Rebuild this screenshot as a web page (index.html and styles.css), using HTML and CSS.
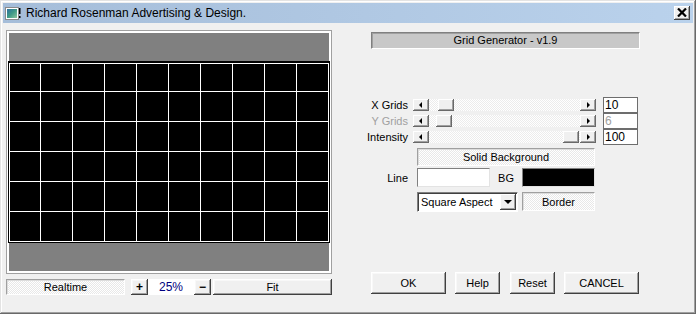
FILE: index.html
```html
<html>
  <head>
    <title>Grid Generator</title>
    <link rel="stylesheet" href="styles.css">
  </head>
<body>
  <div class="window">
    <div class="titlebar">
      <svg class="app-icon" width="16" height="13" viewBox="0 0 16 13">
        <defs>
          <linearGradient id="ico" x1="0" y1="0" x2="1" y2="1">
            <stop offset="0" stop-color="#2f6f9f"/>
            <stop offset="0.5" stop-color="#3f9a86"/>
            <stop offset="1" stop-color="#8fc8a0"/>
          </linearGradient>
        </defs>
        <rect x="0.5" y="0.5" width="13" height="12" fill="#fff" stroke="#8a8a8a"/>
        <rect x="2" y="2" width="10" height="9" fill="url(#ico)"/>
        <rect x="14" y="1" width="1.5" height="6" fill="#000"/>
        <rect x="14" y="9" width="1.5" height="2" fill="#000"/>
      </svg>
      <span class="caption">Richard Rosenman Advertising &amp; Design.</span>
      <div class="close">
        <svg width="10" height="9" viewBox="0 0 10 9">
          <path d="M1 0.5 L9 8.5 M9 0.5 L1 8.5" stroke="#000" stroke-width="2.2"/>
        </svg>
      </div>
    </div>

    <div class="client">
      <div class="left">
        <div class="preview">
          <div class="canvas">
            <svg class="grid" width="322" height="182" viewBox="0 0 322 182">
              <rect width="322" height="182" fill="#000"/>
              <g fill="#fff">
                <rect x="1" y="2" width="1" height="179"/>
                <rect x="32" y="2" width="1" height="179"/>
                <rect x="64" y="2" width="1" height="179"/>
                <rect x="96" y="2" width="1" height="179"/>
                <rect x="128" y="2" width="1" height="179"/>
                <rect x="160" y="2" width="1" height="179"/>
                <rect x="192" y="2" width="1" height="179"/>
                <rect x="224" y="2" width="1" height="179"/>
                <rect x="256" y="2" width="1" height="179"/>
                <rect x="288" y="2" width="1" height="179"/>
                <rect x="320" y="2" width="1" height="179"/>
                <rect x="1" y="2" width="320" height="1"/>
                <rect x="1" y="30" width="320" height="1"/>
                <rect x="1" y="60" width="320" height="1"/>
                <rect x="1" y="90" width="320" height="1"/>
                <rect x="1" y="120" width="320" height="1"/>
                <rect x="1" y="150" width="320" height="1"/>
                <rect x="1" y="180" width="320" height="1"/>
              </g>
            </svg>
          </div>
        </div>
        <div class="zoombar">
          <div class="toggle realtime">Realtime</div>
          <div class="btn step">+</div>
          <div class="zoom">25%</div>
          <div class="btn step">&minus;</div>
          <div class="btn fit">Fit</div>
        </div>
      </div>

      <div class="right">
        <div class="version">Grid Generator - v1.9</div>

        <div class="sliders">
          <div class="row">
            <div class="label">X Grids</div>
            <div class="scroll">
              <div class="arrow"><span class="tri-left"></span></div>
              <div class="track"><div class="thumb" style="margin-left: 9px"></div></div>
              <div class="arrow"><span class="tri-right"></span></div>
            </div>
            <div class="num">10</div>
          </div>
          <div class="row disabled">
            <div class="label">Y Grids</div>
            <div class="scroll">
              <div class="arrow"><span class="tri-left"></span></div>
              <div class="track"><div class="thumb" style="margin-left: 7px"></div></div>
              <div class="arrow"><span class="tri-right"></span></div>
            </div>
            <div class="num">6</div>
          </div>
          <div class="row">
            <div class="label">Intensity</div>
            <div class="scroll">
              <div class="arrow"><span class="tri-left"></span></div>
              <div class="track"><div class="thumb" style="margin-left: 134px"></div></div>
              <div class="arrow"><span class="tri-right"></span></div>
            </div>
            <div class="num">100</div>
          </div>
        </div>

        <div class="toggle solid">Solid Background</div>

        <div class="colors">
          <div class="label">Line</div>
          <div class="swatch line"></div>
          <div class="bg-label">BG</div>
          <div class="swatch bg"></div>
        </div>

        <div class="options">
          <div class="select">
            <span class="value">Square Aspect</span>
            <div class="drop"><span class="tri-down"></span></div>
          </div>
          <div class="toggle border">Border</div>
        </div>

        <div class="actions">
          <div class="btn ok">OK</div>
          <div class="btn help">Help</div>
          <div class="btn reset">Reset</div>
          <div class="btn cancel">CANCEL</div>
        </div>
      </div>
    </div>
  </div>
</body>
</html>
```

FILE: styles.css
```css
html, body {
    margin: 0;
    padding: 0;
    background: #f0f0f0;
}
body {
    font-family: "Liberation Sans", Arial, sans-serif;
    font-size: 11px;
    color: #000;
}
.window {
    width: 696px;
    height: 314px;
    box-sizing: border-box;
    padding: 3px;
    background: #f0f0f0;
    box-shadow: inset -1px -1px #696969, inset 1px 1px #e3e3e3,
                inset -2px -2px #a0a0a0, inset 2px 2px #fff;
    display: flex;
    flex-direction: column;
}

/* title bar */
.titlebar {
    height: 20px;
    display: flex;
    align-items: center;
    padding-left: 2px;
    background: linear-gradient(to right, #a5bdd9, #bad2ec);
}
.app-icon {
    display: block;
    margin-top: 1px;
}
.caption {
    margin-left: 5px;
    font-size: 12px;
    color: #000;
    flex: 1;
}
.close {
    width: 16px;
    height: 14px;
    margin-right: 3px;
    box-sizing: border-box;
    background: #f0f0f0;
    box-shadow: inset -1px -1px #404040, inset 1px 1px #fff, inset -2px -2px #a0a0a0;
    display: flex;
    align-items: center;
    justify-content: center;
}
.close svg {
    display: block;
    margin-top: -1px;
}

/* client */
.client {
    flex: 1;
    display: flex;
    padding: 7px 0 0 3px;
}
.left {
    width: 326px;
    display: flex;
    flex-direction: column;
}
.preview {
    height: 244px;
    box-sizing: border-box;
    border: 1px solid #a0a0a0;
}
.canvas {
    height: 100%;
    box-sizing: border-box;
    border: 2px solid #fff;
    background: #808080;
    display: flex;
    justify-content: center;
    padding-top: 28px;
}
.grid {
    display: block;
    margin: 0 -1px;
}

.zoombar {
    display: flex;
    margin-top: 5px;
    height: 16px;
}
.zoombar .realtime {
    width: 119px;
    margin-right: 6px;
}
.zoombar .step {
    width: 17px;
    font-size: 12px;
    font-weight: bold;
    line-height: 14px;
}
.zoom {
    width: 46px;
    background: #fff;
    color: #000080;
    font-size: 12px;
    text-align: center;
    line-height: 16px;
}
.zoombar .fit {
    width: 119px;
    margin-left: 2px;
}

/* generic controls */
.btn {
    box-sizing: border-box;
    background: #f0f0f0;
    box-shadow: inset -1px -1px #404040, inset 1px 1px #fff,
                inset -2px -2px #a0a0a0, inset 2px 2px #f8f8f8;
    display: flex;
    align-items: center;
    justify-content: center;
}
.toggle {
    box-sizing: border-box;
    border: 1px solid;
    border-color: #a0a0a0 #fff #fff #a0a0a0;
    box-shadow: inset 1px 1px #dcdcdc;
    background: repeating-conic-gradient(#fff 0 25%, #e8e8e8 0 50%) 0 0 / 2px 2px;
    display: flex;
    align-items: center;
    justify-content: center;
}

/* right side */
.right {
    margin-left: 16px;
    width: 300px;
    display: flex;
    flex-direction: column;
}
.version {
    margin: 2px 0 0 23px;
    width: 269px;
    height: 17px;
    box-sizing: border-box;
    border: 1px solid;
    border-color: #808080 #fff #fff #808080;
    box-shadow: inset 1px 1px #a0a0a0;
    background: #c8c8c8;
    text-align: center;
    line-height: 15px;
}

.sliders {
    margin-top: 48px;
}
.row {
    display: flex;
    align-items: center;
    height: 16px;
}
.label {
    width: 60px;
    text-align: right;
}
.row.disabled .label,
.row.disabled .num {
    color: #a0a0a0;
}
.scroll {
    width: 183px;
    height: 12px;
    margin: 0 7px 0 5px;
    display: flex;
}
.arrow, .thumb {
    width: 16px;
    height: 12px;
    box-sizing: border-box;
    background: #f0f0f0;
    box-shadow: inset -1px -1px #696969, inset 1px 1px #fff, inset -2px -2px #a0a0a0;
    display: flex;
    align-items: center;
    justify-content: center;
}
.track {
    flex: 1;
    display: flex;
    background: repeating-conic-gradient(#fff 0 25%, #ececec 0 50%) 0 0 / 2px 2px;
}
.tri-left, .tri-right, .tri-down {
    width: 0;
    height: 0;
    border: 3px solid transparent;
}
.tri-left {
    border-right: 3px solid #000;
    border-left: 0;
    margin-right: 1px;
}
.tri-right {
    border-left: 3px solid #000;
    border-right: 0;
    margin-left: 1px;
}
.tri-down {
    border-width: 4px 4px 0 4px;
    border-top-color: #000;
}
.num {
    width: 35px;
    height: 16px;
    box-sizing: border-box;
    border: 1px solid #6d6d6d;
    background: #fff;
    font-size: 12px;
    line-height: 14px;
    padding-left: 1px;
}

.solid {
    margin: 3px 0 0 69px;
    width: 178px;
    height: 18px;
}

.colors {
    display: flex;
    align-items: center;
    margin-top: 2px;
    height: 19px;
}
.colors .label {
    margin-right: 9px;
}
.swatch {
    width: 73px;
    height: 19px;
    box-sizing: border-box;
    border: 1px solid;
    border-color: #808080 #e3e3e3 #e3e3e3 #808080;
}
.swatch.line {
    background: #fff;
}
.swatch.bg {
    background: #000;
}
.bg-label {
    width: 32px;
    text-align: center;
}

.options {
    display: flex;
    margin: 5px 0 0 69px;
    height: 20px;
}
.select {
    width: 101px;
    height: 20px;
    box-sizing: border-box;
    border: 1px solid;
    border-color: #808080 #fff #fff #808080;
    box-shadow: inset 1px 1px #404040;
    background: #fff;
    display: flex;
    align-items: center;
    padding: 0 1px 0 3px;
}
.select .value {
    flex: 1;
    white-space: nowrap;
}
.drop {
    width: 16px;
    height: 16px;
    box-sizing: border-box;
    background: #f0f0f0;
    box-shadow: inset -1px -1px #404040, inset 1px 1px #fff, inset -2px -2px #a0a0a0;
    display: flex;
    align-items: center;
    justify-content: center;
}
.options .border {
    width: 73px;
    height: 19px;
    margin-left: 4px;
}

.actions {
    display: flex;
    margin: 60px 0 0 23px;
    height: 22px;
}
.actions .ok,
.actions .cancel {
    width: 75px;
}
.actions .help,
.actions .reset {
    width: 45px;
}
.actions .help {
    margin-left: 9px;
}
.actions .reset {
    margin-left: 10px;
}
.actions .cancel {
    margin-left: 9px;
}
```
